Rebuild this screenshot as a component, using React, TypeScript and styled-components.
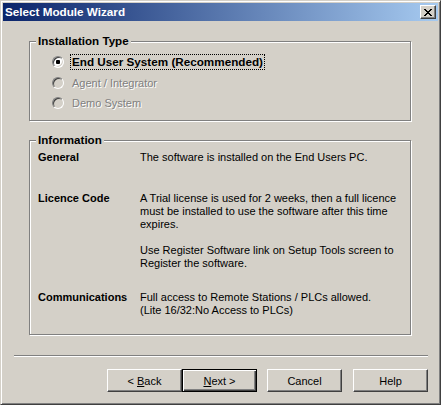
import React from "react";
import styled, { createGlobalStyle } from "styled-components";

const GlobalStyle = createGlobalStyle`
  html, body { margin: 0; padding: 0; background: #d4d0c8; }
  body { font-family: "Liberation Sans", Arial, sans-serif; font-size: 11px; color: #000; }
  * { box-sizing: border-box; }
`;

const Window = styled.div`
  width: 441px;
  height: 405px;
  background: #d4d0c8;
  border: 1px solid;
  border-color: #d4d0c8 #404040 #404040 #d4d0c8;
  box-shadow: inset 1px 1px #fff, inset -1px -1px #808080;
  padding: 2px;
  display: flex;
  flex-direction: column;
`;

const TitleBar = styled.div`
  height: 18px;
  flex: none;
  background: linear-gradient(to right, #0a246a, #a6caf0);
  display: flex;
  align-items: center;
  justify-content: space-between;
  padding: 0 2px;
`;

const Title = styled.span`
  color: #fff;
  font-weight: bold;
  font-size: 11.7px;
  line-height: 14px;
`;

const CloseButton = styled.div`
  width: 16px;
  height: 14px;
  background: #d4d0c8;
  border: 1px solid;
  border-color: #fff #404040 #404040 #fff;
  box-shadow: inset -1px -1px #808080, inset 1px 1px #d4d0c8;
  display: flex;
  align-items: center;
  justify-content: center;
`;

const Body = styled.div`
  flex: 1;
  display: flex;
  flex-direction: column;
`;

const GroupBox = styled.div<{ $mt: number; $h: number }>`
  margin: ${(p) => p.$mt}px 27px 0 26px;
  height: ${(p) => p.$h}px;
  border: 1px solid #808080;
  box-shadow: inset 1px 1px #fff, 1px 1px #fff;
  display: flex;
  flex-direction: column;
`;

const Legend = styled.div`
  align-self: flex-start;
  margin: -8px 0 0 6px;
  padding: 0 2px;
  height: 13px;
  line-height: 13px;
  background: #d4d0c8;
  font-weight: bold;
  font-size: 11.6px;
`;

const RadioList = styled.div`
  padding: 7px 0 0 22px;
  display: flex;
  flex-direction: column;
`;

const RadioRow = styled.div<{ $mt: number }>`
  margin-top: ${(p) => p.$mt}px;
  display: flex;
  align-items: center;
  height: 16px;
`;

const RadioCircle = styled.div<{ $disabled?: boolean }>`
  width: 12px;
  height: 12px;
  border-radius: 50%;
  border: 1px solid;
  border-color: #808080 #fff #fff #808080;
  box-shadow: inset 1px 1px #404040, inset -1px -1px #d4d0c8;
  background: ${(p) => (p.$disabled ? "#d4d0c8" : "#fff")};
  display: flex;
  align-items: center;
  justify-content: center;
`;

const RadioDot = styled.div`
  width: 4px;
  height: 4px;
  border-radius: 1px;
  background: #000;
`;

const RadioLabel = styled.span<{ $disabled?: boolean; $focused?: boolean; $bold?: boolean }>`
  margin-left: 6px;
  padding: 0 1px;
  height: 16px;
  line-height: 14px;
  border: 1px dotted ${(p) => (p.$focused ? "#000" : "transparent")};
  font-weight: ${(p) => (p.$bold ? "bold" : "normal")};
  font-size: ${(p) => (p.$bold ? "11.7px" : "11px")};
  color: ${(p) => (p.$disabled ? "#808080" : "#000")};
  text-shadow: ${(p) => (p.$disabled ? "1px 1px #fff" : "none")};
  white-space: nowrap;
`;

const InfoList = styled.div`
  padding: 5px 0 0 8px;
  display: flex;
  flex-direction: column;
`;

const InfoRow = styled.div<{ $mt: number }>`
  margin-top: ${(p) => p.$mt}px;
  display: grid;
  grid-template-columns: 102px 1fr;
  line-height: 13px;
`;

const InfoLabel = styled.div`
  font-weight: bold;
  white-space: nowrap;
`;

const InfoText = styled.div`
  white-space: nowrap;
`;

const Separator = styled.div`
  margin: 20px 10px 0 11px;
  height: 2px;
  border-top: 1px solid #808080;
  border-bottom: 1px solid #fff;
`;

const ButtonRow = styled.div`
  margin: 12px 10px 0 0;
  display: flex;
  justify-content: flex-end;
`;

const Button = styled.div<{ $default?: boolean; $ml?: number }>`
  width: 75px;
  height: 23px;
  margin-left: ${(p) => p.$ml ?? 0}px;
  display: flex;
  align-items: center;
  justify-content: center;
  font-size: 11px;
  background: #d4d0c8;
  border: 1px solid;
  border-color: ${(p) => (p.$default ? "#000" : "#fff #404040 #404040 #fff")};
  box-shadow: ${(p) =>
    p.$default
      ? "inset 1px 1px #fff, inset -1px -1px #404040, inset -2px -2px #808080"
      : "inset -1px -1px #808080, inset 1px 1px #d4d0c8"};
`;

const CloseGlyph = () => {
  const rows = ["XX....XX", ".XX..XX.", "..XXXX..", "...XX...", "..XXXX..", ".XX..XX.", "XX....XX"];
  return (
    <svg width="8" height="7" viewBox="0 0 8 7" shapeRendering="crispEdges">
      {rows.flatMap((r, y) =>
        r.split("").map((c, x) => (c === "X" ? <rect key={`${x}-${y}`} x={x} y={y} width={1} height={1} fill="#000" /> : null))
      )}
    </svg>
  );
};

export default function App() {
  return (
    <>
      <GlobalStyle />
      <Window>
        <TitleBar>
          <Title>Select Module Wizard</Title>
          <CloseButton>
            <CloseGlyph />
          </CloseButton>
        </TitleBar>
        <Body>
          <GroupBox $mt={20} $h={80}>
            <Legend>Installation Type</Legend>
            <RadioList>
              <RadioRow $mt={0}>
                <RadioCircle>
                  <RadioDot />
                </RadioCircle>
                <RadioLabel $focused $bold>End User System (Recommended)</RadioLabel>
              </RadioRow>
              <RadioRow $mt={5}>
                <RadioCircle $disabled />
                <RadioLabel $disabled>Agent / Integrator</RadioLabel>
              </RadioRow>
              <RadioRow $mt={4}>
                <RadioCircle $disabled />
                <RadioLabel $disabled>Demo System</RadioLabel>
              </RadioRow>
            </RadioList>
          </GroupBox>
          <GroupBox $mt={19} $h={195}>
            <Legend>Information</Legend>
            <InfoList>
              <InfoRow $mt={0}>
                <InfoLabel>General</InfoLabel>
                <InfoText>The software is installed on the End Users PC.</InfoText>
              </InfoRow>
              <InfoRow $mt={28}>
                <InfoLabel>Licence Code</InfoLabel>
                <InfoText>
                  A Trial license is used for 2 weeks, then a full licence
                  <br />
                  must be installed to use the software after this time
                  <br />
                  expires.
                  <br />
                  <br />
                  Use Register Software link on Setup Tools screen to
                  <br />
                  Register the software.
                </InfoText>
              </InfoRow>
              <InfoRow $mt={21}>
                <InfoLabel>Communications</InfoLabel>
                <InfoText>
                  Full access to Remote Stations / PLCs allowed.
                  <br />
                  (Lite 16/32:No Access to PLCs)
                </InfoText>
              </InfoRow>
            </InfoList>
          </GroupBox>
          <Separator />
          <ButtonRow>
            <Button>
              &lt;&nbsp;<u>B</u>ack
            </Button>
            <Button $default>
              <u>N</u>ext&nbsp;&gt;
            </Button>
            <Button $ml={10}>Cancel</Button>
            <Button $ml={11}>Help</Button>
          </ButtonRow>
        </Body>
      </Window>
    </>
  );
}
